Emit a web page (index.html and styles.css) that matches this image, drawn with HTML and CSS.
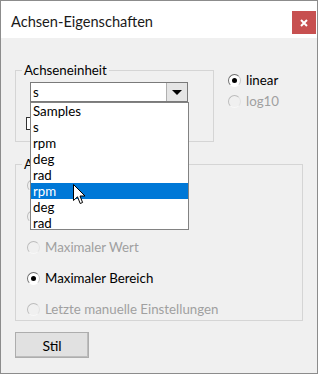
FILE: index.html
```html
<!DOCTYPE html>
<html lang="de">
<head>
    <meta charset="UTF-8">
    <title>Achsen-Eigenschaften</title>
    <link rel="stylesheet" href="styles.css">
</head>
<body>

    <div class="window">
        <div class="titlebar">
            <span class="title">Achsen-Eigenschaften</span>
            <span class="close">
                <svg width="8" height="8" viewBox="0 0 8 8"><path d="M1 1 L7 7 M7 1 L1 7" stroke="#fff" stroke-width="2"/></svg>
            </span>
        </div>

        <div class="content">
            <div class="top-row">
                <!-- Achseneinheit -->
                <div class="group group-unit">
                    <span class="group-title">Achseneinheit</span>
                    <div class="combo">
                        <span class="combo-value">s</span>
                        <span class="combo-button"><span class="arrow"></span></span>
                    </div>
                    <div class="check"></div>
                </div>

                <div class="scale">
                    <div class="radio-row"><span class="radio checked"></span><span class="label">linear</span></div>
                    <div class="radio-row disabled"><span class="radio"></span><span class="label">log10</span></div>
                </div>
            </div>

            <!-- Achsenbereich -->
            <div class="group group-range">
                <span class="group-title">A</span>
                <div class="radio-row disabled"><span class="radio"></span></div>
                <div class="radio-row disabled"><span class="radio"></span></div>
                <div class="radio-row disabled"><span class="radio"></span><span class="label">Maximaler Wert</span></div>
                <div class="radio-row"><span class="radio checked"></span><span class="label">Maximaler Bereich</span></div>
                <div class="radio-row disabled"><span class="radio"></span><span class="label">Letzte manuelle Einstellungen</span></div>
            </div>

            <button class="btn">Stil</button>
        </div>

        <!-- aufgeklappte Liste -->
        <ul class="listbox">
            <li>Samples</li>
            <li>s</li>
            <li>rpm</li>
            <li>deg</li>
            <li>rad</li>
            <li class="selected">rpm</li>
            <li>deg</li>
            <li>rad</li>
        </ul>

        <svg class="cursor" width="13" height="21" viewBox="0 0 13 21">
            <path d="M0.5 0.5 L0.5 16.5 L4.5 12.8 L7.2 19.5 L9.6 18.5 L7 12 L12 12 Z" fill="#fff" stroke="#000" stroke-width="1" stroke-linejoin="round"/>
        </svg>
    </div>

</body>
</html>
```

FILE: styles.css
```css
/* Dialogfenster */
body {
    margin: 0;
    font-family: Lato, "Noto Sans", sans-serif;
    font-size: 13.3px;
    color: #000;
}

.window {
    position: relative;
    width: 318px;
    height: 374px;
    box-sizing: border-box;
    border: 1px solid #8c8c8c;
    background-color: #f0f0f0;
}

.titlebar {
    display: flex;
    align-items: flex-start;
    justify-content: space-between;
    height: 37px;
    background-color: #fff;
}

.title {
    margin: 12px 0 0 10px;
    font-size: 14.6px;
    color: #1a1a1a;
}

.close {
    display: flex;
    align-items: center;
    justify-content: center;
    width: 24px;
    height: 23px;
    margin: 10px 1px 0 0;
    background-color: #c75050;
}

.content {
    padding: 32px 0 0 14px;
}

.top-row {
    display: flex;
    gap: 14px;
}

/* Gruppenrahmen */
.group {
    position: relative;
    box-sizing: border-box;
    border: 1px solid #d5d5d5;
}

.group-title {
    position: absolute;
    top: -10px;
    left: 6px;
    padding: 0 2px;
    line-height: 18px;
    background-color: #f0f0f0;
}

.group-unit {
    width: 199px;
    height: 72px;
    padding: 11px 0 0 10px;
}

.combo {
    display: flex;
    justify-content: space-between;
    width: 158px;
    height: 20px;
    margin-left: 4px;
    box-sizing: border-box;
    border: 1px solid #7a7a7a;
    background-color: #fff;
}

.combo-value {
    padding-left: 2px;
    line-height: 18px;
}

.combo-button {
    display: flex;
    align-items: center;
    justify-content: center;
    width: 20px;
    background-color: #e5e5e5;
    border-left: 1px solid #b0b0b0;
}

.arrow {
    width: 0;
    height: 0;
    border-left: 5px solid transparent;
    border-right: 5px solid transparent;
    border-top: 5px solid #000;
}

.check {
    width: 13px;
    height: 13px;
    margin-top: 15px;
    box-sizing: border-box;
    border: 1px solid #333;
    background-color: #fff;
}

.scale {
    display: flex;
    flex-direction: column;
    gap: 5px;
    margin-top: 2px;
}

/* Optionsfelder */
.radio-row {
    display: flex;
    align-items: center;
    gap: 5px;
    height: 16px;
}

.radio {
    position: relative;
    width: 13px;
    height: 13px;
    box-sizing: border-box;
    border-radius: 50%;
    border: 1px solid;
    border-color: #6e6e6e #c8c8c8 #ffffff #6e6e6e;
    background-color: #fff;
}

.radio.checked::after {
    content: "";
    position: absolute;
    top: 3px;
    left: 3px;
    width: 5px;
    height: 5px;
    border-radius: 50%;
    background-color: #000;
}

.radio-row.disabled .label {
    color: #a0a0a0;
}

.radio-row.disabled .radio {
    border-color: #bcbcbc #e2e2e2 #f8f8f8 #bcbcbc;
    background-color: #f0f0f0;
}

.group-range {
    display: flex;
    flex-direction: column;
    gap: 15px;
    width: 288px;
    height: 157px;
    margin-top: 22px;
    padding: 12px 0 0 11px;
}

.btn {
    display: block;
    width: 74px;
    height: 26px;
    margin-top: 11px;
    font-family: inherit;
    font-size: 14px;
    border: 1px solid #adadad;
    background-color: #e1e1e1;
    box-shadow: inset -1px -1px 0 #bdbdbd;
}

/* Liste über dem Dialog */
.listbox {
    position: absolute;
    top: 101px;
    left: 29px;
    width: 159px;
    height: 128px;
    margin: 0;
    padding: 0;
    list-style: none;
    box-sizing: border-box;
    border: 1px solid #828282;
    background-color: #fff;
}

.listbox li {
    height: 16px;
    padding-left: 2px;
    line-height: 16px;
}

.listbox li.selected {
    background-color: #0078d7;
    color: #fff;
}

.cursor {
    position: absolute;
    top: 183px;
    left: 72px;
}
```
